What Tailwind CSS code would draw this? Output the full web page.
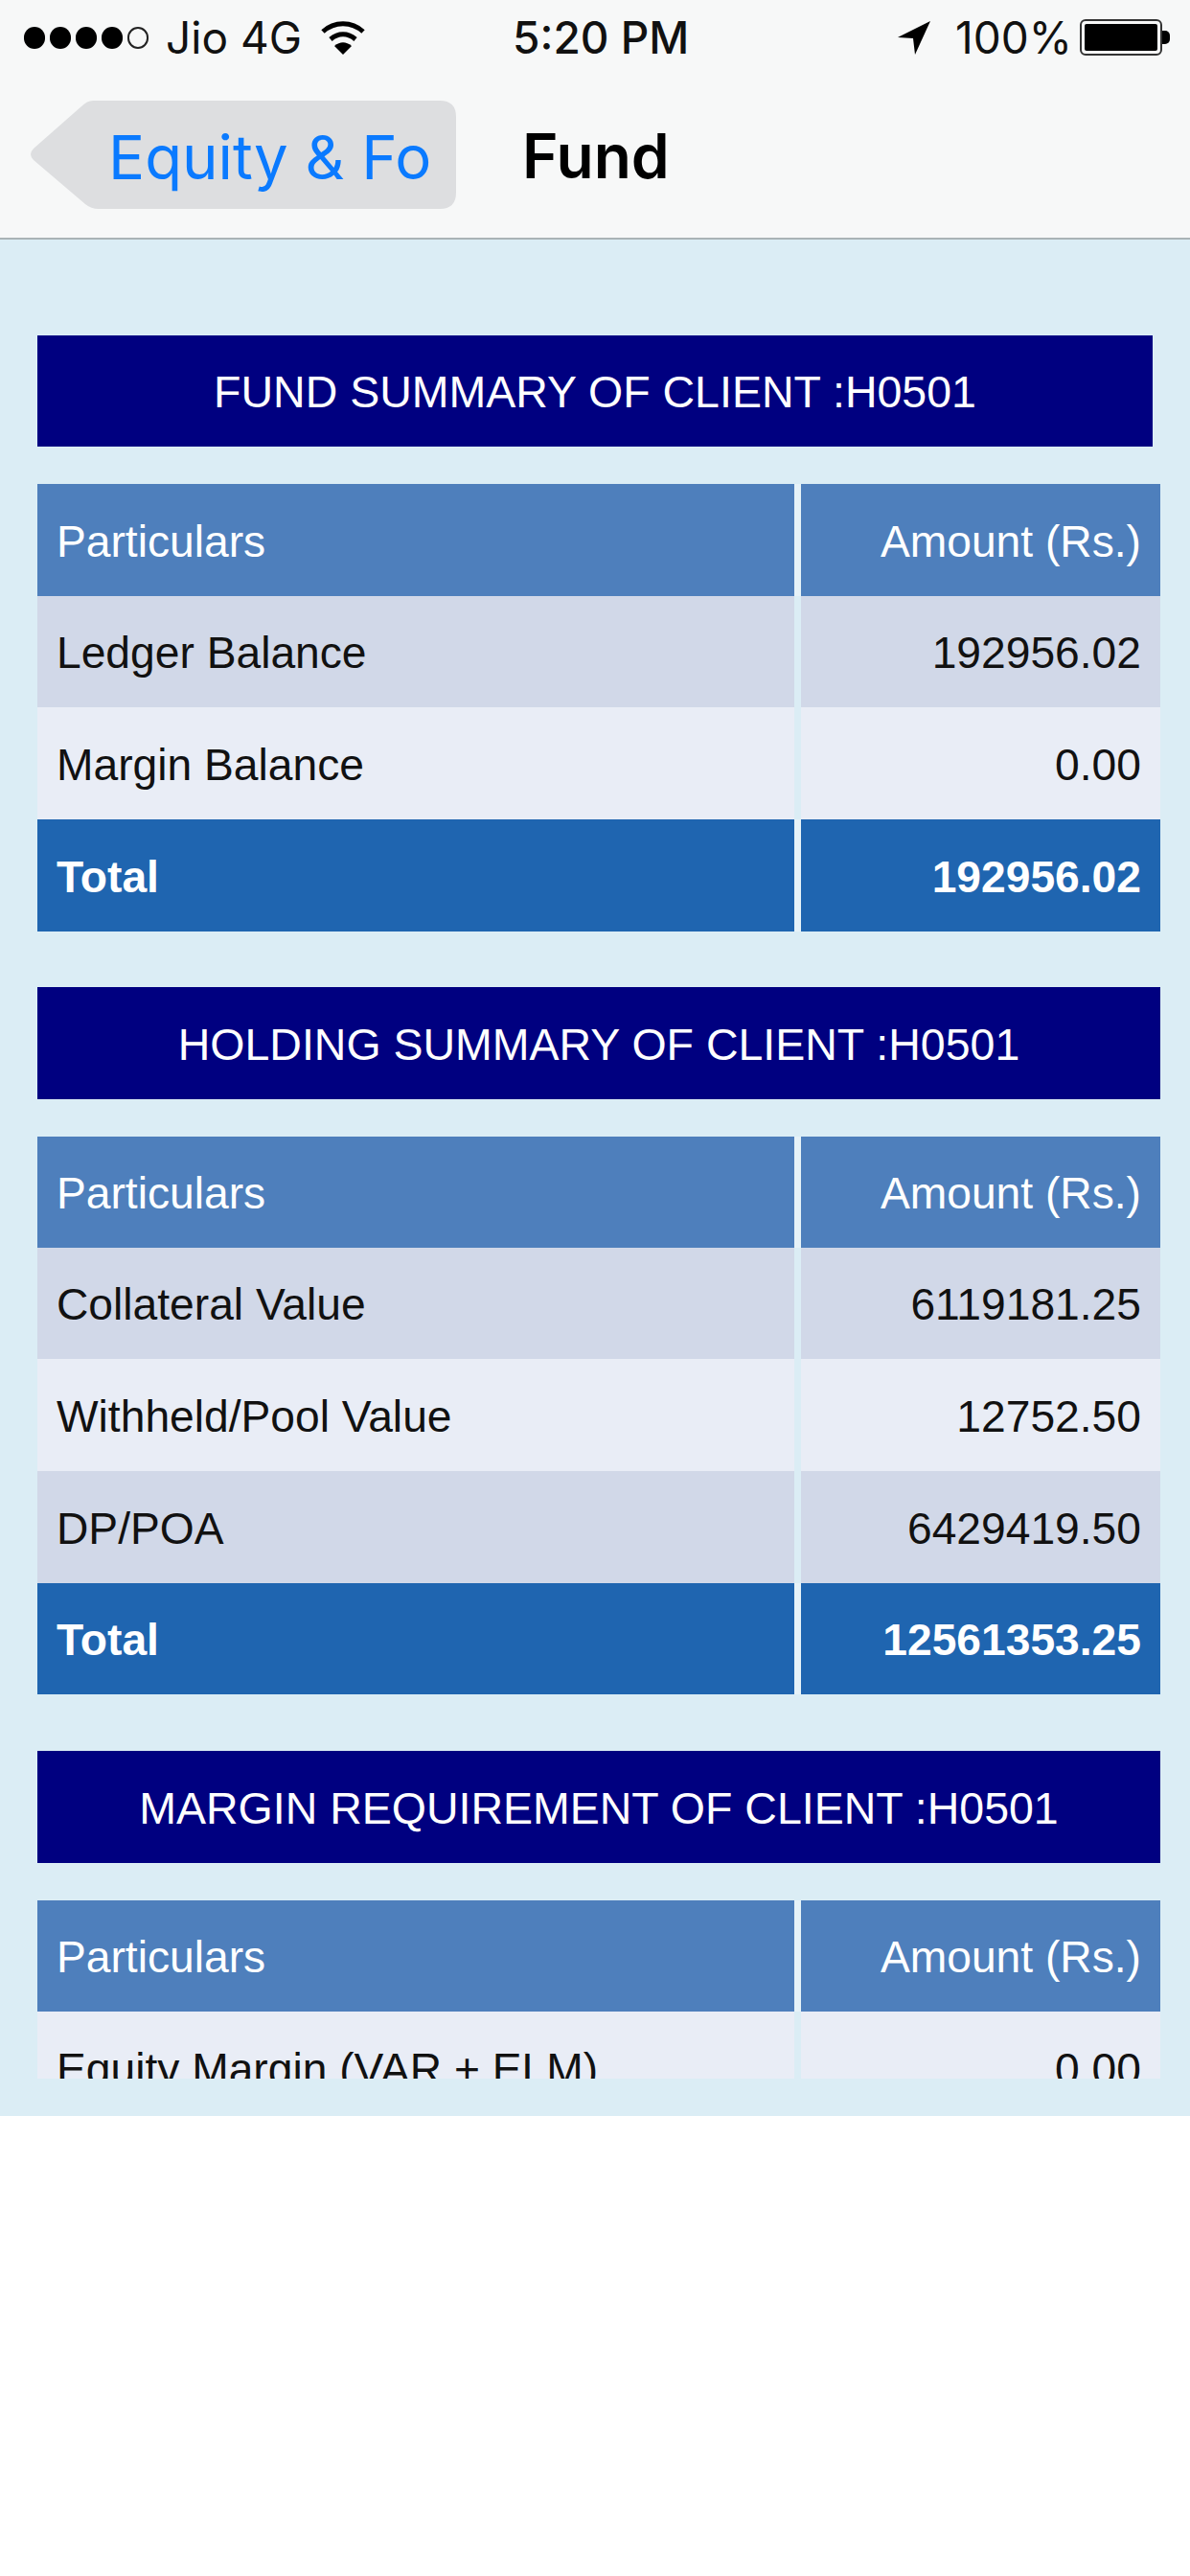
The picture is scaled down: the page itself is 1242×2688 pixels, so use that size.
<!DOCTYPE html>
<html lang="en">
<head>
  <meta charset="UTF-8" />
  <title>Fund</title>
  <script src="https://cdn.jsdelivr.net/npm/@tailwindcss/browser@4"></script>
</head>
<body class="bg-white w-[1242px] font-['Liberation_Sans',Arial,sans-serif]">

  <!-- Status bar + nav -->
  <div class="bg-[#f7f8f8] h-[250px] border-b-2 border-[#a9b3b6] font-['Inter',sans-serif]">
    <div class="h-[78px] flex items-center text-[46px] text-[#111]">
      <div class="flex items-center gap-[5px] ml-[25px] w-[130px]">
        <span class="w-[22px] h-[23px] rounded-full bg-black shrink-0"></span>
        <span class="w-[22px] h-[23px] rounded-full bg-black shrink-0"></span>
        <span class="w-[22px] h-[23px] rounded-full bg-black shrink-0"></span>
        <span class="w-[22px] h-[23px] rounded-full bg-black shrink-0"></span>
        <span class="w-[22px] h-[23px] rounded-full border-2 border-[#222] shrink-0"></span>
      </div>
      <span class="ml-[18px] w-[162px] font-normal whitespace-nowrap">Jio 4G</span>
      <svg class="w-[46px] h-[36px]" viewBox="0 0 46 36">
        <path d="M2 12C14 1 32 1 44 12" fill="none" stroke="#000" stroke-width="5"/>
        <path d="M10 20C18 13 28 13 36 20" fill="none" stroke="#000" stroke-width="5"/>
        <path d="M14 27C20 22 26 22 32 27L23 36Z" fill="#000"/>
      </svg>
      <span class="ml-[154px] w-[190px] font-medium whitespace-nowrap">5:20 PM</span>
      <svg class="ml-[211px] w-[36px] h-[36px]" viewBox="0 0 36 36">
        <path d="M35 1L1 18L17 19L19 36Z" fill="#000"/>
      </svg>
      <span class="ml-[25px] w-[122px] font-normal whitespace-nowrap">100%</span>
      <div class="ml-[8px] w-[86px] h-[38px] rounded-[6px] border-2 border-[#333] p-[3px] shrink-0">
        <div class="w-full h-full bg-black rounded-[2px]"></div>
      </div>
      <div class="w-[8px] h-[14px] bg-black rounded-r-[5px] shrink-0"></div>
    </div>
    <div class="flex items-center h-[113px] mt-[27px]">
      <div class="relative ml-[31px] w-[445px] h-[113px] shrink-0">
        <svg class="absolute inset-0 w-[445px] h-[113px]" viewBox="0 0 445 113">
          <path d="M66 0H428Q445 0 445 17V96Q445 113 428 113H72Q64 113 58 108L4 62Q-2 56 4 50L54 6Q60 0 66 0Z" fill="#dddee0"/>
        </svg>
        <span class="relative block ml-[82px] pt-[2px] leading-[113px] text-[63.5px] text-[#0a7aff] whitespace-nowrap">Equity &amp; Fo</span>
      </div>
      <span class="ml-[69px] pt-[2px] text-[64px] font-semibold text-black">Fund</span>
    </div>
  </div>

  <!-- Scrolling content -->
  <div class="bg-[#dbedf5] h-[1958px] pt-[100px] pl-[39px] pr-[31px]">
    <div class="h-[1819px] overflow-hidden text-[46.2px]">

      <div class="bg-[#000080] text-white h-[116px] w-[1164px] pt-[4px] flex items-center justify-center text-[46.5px]">FUND SUMMARY OF CLIENT :H0501</div>
      <table class="w-[1172px] table-fixed mt-[39px] border-separate border-spacing-0">
        <tbody>
          <tr class="h-[117px] bg-[#4e7fbc] text-white">
            <td class="w-[797px] pt-[4px] px-[20px] border-r-[7px] border-[#e6f2f8]">Particulars</td>
            <td class="pt-[4px] px-[20px] text-right">Amount (Rs.)</td>
          </tr>
          <tr class="h-[116px] bg-[#d1d8e8] text-[#111]">
            <td class="pt-[4px] px-[20px] border-r-[7px] border-[#dbedf5]">Ledger Balance</td>
            <td class="pt-[4px] px-[20px] text-right">192956.02</td>
          </tr>
          <tr class="h-[117px] bg-[#e9edf6] text-[#111]">
            <td class="pt-[4px] px-[20px] border-r-[7px] border-[#dbedf5]">Margin Balance</td>
            <td class="pt-[4px] px-[20px] text-right">0.00</td>
          </tr>
          <tr class="h-[117px] bg-[#1f65b0] text-white font-bold">
            <td class="pt-[4px] px-[20px] border-r-[7px] border-[#e6f2f8]">Total</td>
            <td class="pt-[4px] px-[20px] text-right">192956.02</td>
          </tr>
        </tbody>
      </table>

      <div class="bg-[#000080] text-white h-[117px] w-[1172px] mt-[58px] pt-[4px] flex items-center justify-center text-[46.5px]">HOLDING SUMMARY OF CLIENT :H0501</div>
      <table class="w-[1172px] table-fixed mt-[39px] border-separate border-spacing-0">
        <tbody>
          <tr class="h-[116px] bg-[#4e7fbc] text-white">
            <td class="w-[797px] pt-[4px] px-[20px] border-r-[7px] border-[#e6f2f8]">Particulars</td>
            <td class="pt-[4px] px-[20px] text-right">Amount (Rs.)</td>
          </tr>
          <tr class="h-[116px] bg-[#d1d8e8] text-[#111]">
            <td class="pt-[4px] px-[20px] border-r-[7px] border-[#dbedf5]">Collateral Value</td>
            <td class="pt-[4px] px-[20px] text-right">6119181.25</td>
          </tr>
          <tr class="h-[117px] bg-[#e9edf6] text-[#111]">
            <td class="pt-[4px] px-[20px] border-r-[7px] border-[#dbedf5]">Withheld/Pool Value</td>
            <td class="pt-[4px] px-[20px] text-right">12752.50</td>
          </tr>
          <tr class="h-[117px] bg-[#d1d8e8] text-[#111]">
            <td class="pt-[4px] px-[20px] border-r-[7px] border-[#dbedf5]">DP/POA</td>
            <td class="pt-[4px] px-[20px] text-right">6429419.50</td>
          </tr>
          <tr class="h-[116px] bg-[#1f65b0] text-white font-bold">
            <td class="pt-[4px] px-[20px] border-r-[7px] border-[#e6f2f8]">Total</td>
            <td class="pt-[4px] px-[20px] text-right">12561353.25</td>
          </tr>
        </tbody>
      </table>

      <div class="bg-[#000080] text-white h-[117px] w-[1172px] mt-[59px] pt-[4px] flex items-center justify-center text-[46.5px]">MARGIN REQUIREMENT OF CLIENT :H0501</div>
      <table class="w-[1172px] table-fixed mt-[39px] border-separate border-spacing-0">
        <tbody>
          <tr class="h-[116px] bg-[#4e7fbc] text-white">
            <td class="w-[797px] pt-[4px] px-[20px] border-r-[7px] border-[#e6f2f8]">Particulars</td>
            <td class="pt-[4px] px-[20px] text-right">Amount (Rs.)</td>
          </tr>
          <tr class="h-[117px] bg-[#e9edf6] text-[#111]">
            <td class="pt-[4px] px-[20px] border-r-[7px] border-[#dbedf5]">Equity Margin (VAR + ELM)</td>
            <td class="pt-[4px] px-[20px] text-right">0.00</td>
          </tr>
        </tbody>
      </table>

    </div>
  </div>

</body>
</html>
